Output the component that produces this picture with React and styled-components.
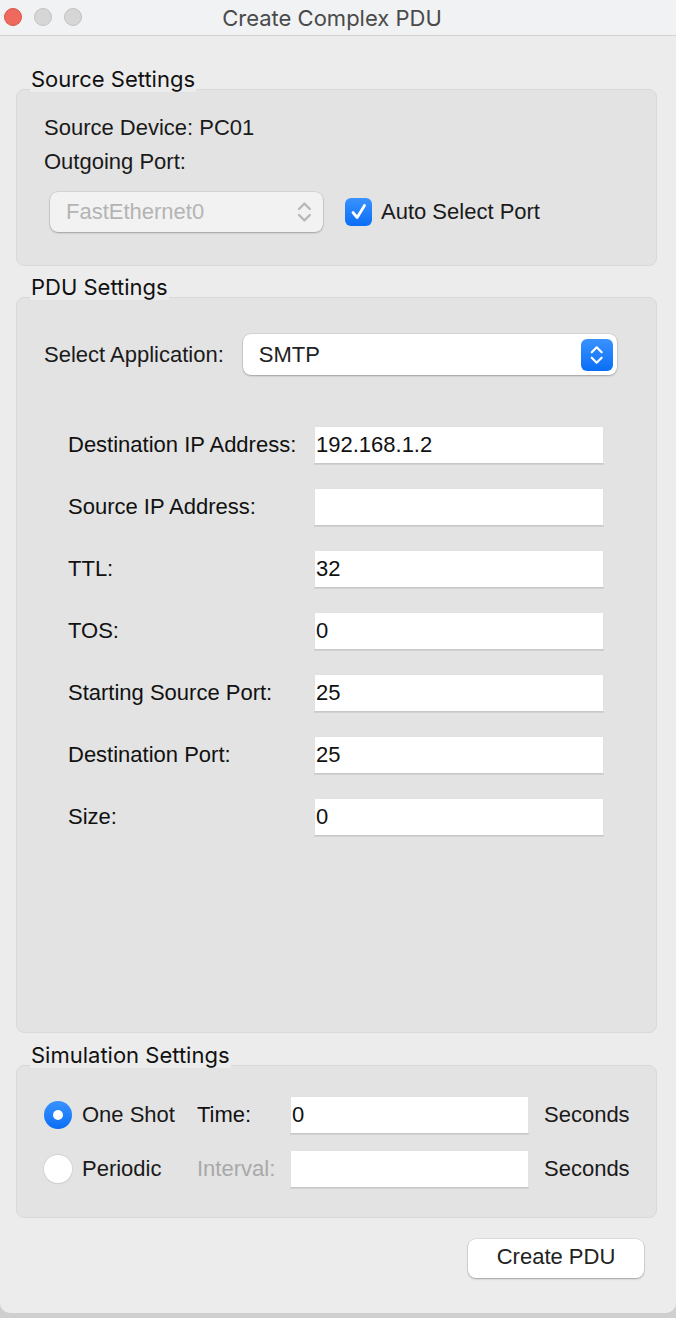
import React from "react";
import styled, { createGlobalStyle } from "styled-components";

const GlobalStyle = createGlobalStyle`
  html, body {
    margin: 0;
    padding: 0;
    background: #cfcfcf;
  }
  * {
    box-sizing: border-box;
  }
`;

const Window = styled.div`
  width: 676px;
  height: 1313px;
  background: #ececec;
  border-radius: 0 0 10px 10px;
  display: flex;
  flex-direction: column;
  overflow: hidden;
  font-family: "Liberation Sans", Arial, sans-serif;
  font-size: 22px;
  color: #1a1a1a;
`;

const TitleBar = styled.div`
  height: 36px;
  flex: none;
  background: #f1f2f4;
  border-bottom: 1px solid #d2d2d2;
  display: flex;
  align-items: center;
  position: relative;
`;

const Lights = styled.div`
  display: flex;
  gap: 12px;
  position: absolute;
  left: 4px;
  top: 8px;
`;

const Light = styled.span`
  width: 18px;
  height: 18px;
  border-radius: 50%;
  background: ${p => (p.$red ? "#ee6a5e" : "#d6d6d6")};
  border: 1px solid ${p => (p.$red ? "#d85448" : "#c3c3c3")};
`;

const Title = styled.div`
  flex: 1;
  text-align: center;
  font-family: Inter, "Liberation Sans", sans-serif;
  font-size: 22px;
  color: #4a4a4a;
  margin-right: 12px;
`;

const Body = styled.div`
  flex: 1;
  display: flex;
  flex-direction: column;
  padding: 30px 19px 0 16px;
`;

const SectionLabel = styled.div`
  align-self: flex-start;
  margin-left: 14px;
  margin-top: ${p => p.$top || 0}px;
  margin-bottom: -3px;
  padding: 0 1px;
  height: 26px;
  line-height: 26px;
  background: #ececec;
  font-family: Inter, "Liberation Sans", sans-serif;
  font-size: 22px;
  color: #111;
  position: relative;
  z-index: 1;
`;

const Panel = styled.div`
  background: #e3e3e3;
  border: 1px solid #d9d9d9;
  border-radius: 8px;
  padding: ${p => p.$pad};
  display: flex;
  flex-direction: column;
`;

const TextLine = styled.div`
  height: 34px;
  line-height: 34px;
`;

const PortRow = styled.div`
  display: flex;
  align-items: center;
  margin-top: 13px;
  margin-left: 6px;
  gap: 22px;
`;

const PopupSelect = styled.div`
  width: ${p => p.$w}px;
  height: ${p => p.$h}px;
  border-radius: 8px;
  background: ${p => (p.$disabled ? "#f2f2f2" : "#ffffff")};
  color: ${p => (p.$disabled ? "#b4b4b4" : "#222")};
  box-shadow: 0 0 0 0.5px rgba(0, 0, 0, 0.12), 0 1px 2px rgba(0, 0, 0, 0.25);
  display: flex;
  align-items: center;
  justify-content: space-between;
  padding: 0 ${p => (p.$disabled ? 10 : 4)}px 0 16px;
`;

const Stepper = styled.span`
  width: 32px;
  height: 32px;
  border-radius: 6px;
  background: linear-gradient(#3a92ff, #0a6ef5);
  display: flex;
  align-items: center;
  justify-content: center;
`;

const CheckWrap = styled.label`
  display: flex;
  align-items: center;
  gap: 9px;
`;

const CheckBox = styled.span`
  width: 27px;
  height: 28px;
  border-radius: 6px;
  background: linear-gradient(#3a92ff, #0a6ef5);
  display: flex;
  align-items: center;
  justify-content: center;
`;

const AppRow = styled.div`
  display: flex;
  align-items: center;
  gap: 19px;
`;

const FieldGrid = styled.div`
  display: grid;
  grid-template-columns: 246px 290px;
  row-gap: 24px;
  align-items: center;
  margin-top: 51px;
  margin-left: 24px;
`;

const TextField = styled.div`
  height: 38px;
  width: ${p => p.$w || 290}px;
  background: #fff;
  border: 1px solid #e2e2e2;
  border-bottom-color: #c8c8c8;
  box-shadow: 0 1px 0 rgba(0, 0, 0, 0.08);
  line-height: 36px;
  padding-left: 1px;
  color: #111;
`;

const SimGrid = styled.div`
  display: grid;
  grid-template-columns: 153px 93px 239px auto;
  row-gap: 16px;
  align-items: center;
`;

const RadioWrap = styled.label`
  display: flex;
  align-items: center;
  gap: 10px;
`;

const Radio = styled.span`
  width: 28px;
  height: 28px;
  border-radius: 50%;
  display: flex;
  align-items: center;
  justify-content: center;
  background: ${p => (p.$on ? "linear-gradient(#3a92ff, #0a6ef5)" : "#fff")};
  box-shadow: ${p =>
    p.$on ? "none" : "0 0 0 1px #d4d4d4, 0 1px 1px rgba(0,0,0,0.15)"};
  &::after {
    content: "";
    width: 10px;
    height: 10px;
    border-radius: 50%;
    background: #fff;
    display: ${p => (p.$on ? "block" : "none")};
  }
`;

const FieldLabel = styled.span`
  color: ${p => (p.$dim ? "#a9a9a9" : "#111")};
`;

const Units = styled.span`
  margin-left: 15px;
`;

const Footer = styled.div`
  display: flex;
  justify-content: flex-end;
  margin-top: 21px;
  padding-right: 13px;
`;

const Button = styled.button`
  width: 176px;
  height: 39px;
  border: none;
  border-radius: 8px;
  background: #fff;
  box-shadow: 0 0 0 0.5px rgba(0, 0, 0, 0.12), 0 1px 2px rgba(0, 0, 0, 0.28);
  font-family: "Liberation Sans", Arial, sans-serif;
  font-size: 22px;
  color: #222;
  padding: 0 0 4px;
`;

const Chevrons = ({ color, size = 18 }) => (
  <svg width={size * 0.7} height={size} viewBox="0 0 14 20" fill="none">
    <path d="M2.5 7.5 L7 3 L11.5 7.5" stroke={color} strokeWidth="2" strokeLinecap="round" strokeLinejoin="round" />
    <path d="M2.5 12.5 L7 17 L11.5 12.5" stroke={color} strokeWidth="2" strokeLinecap="round" strokeLinejoin="round" />
  </svg>
);

const fields = [
  ["Destination IP Address:", "192.168.1.2"],
  ["Source IP Address:", ""],
  ["TTL:", "32"],
  ["TOS:", "0"],
  ["Starting Source Port:", "25"],
  ["Destination Port:", "25"],
  ["Size:", "0"],
];

export default function App() {
  return (
    <>
      <GlobalStyle />
      <Window>
        <TitleBar>
          <Lights>
            <Light $red />
            <Light />
            <Light />
          </Lights>
          <Title>Create Complex PDU</Title>
        </TitleBar>

        <Body>
          <SectionLabel>Source Settings</SectionLabel>
          <Panel $pad="21px 0 33px 27px">
            <TextLine>Source Device: PC01</TextLine>
            <TextLine>Outgoing Port:</TextLine>
            <PortRow>
              <PopupSelect $w={273} $h={40} $disabled>
                <span>FastEthernet0</span>
                <Chevrons color="#b8b8b8" size={24} />
              </PopupSelect>
              <CheckWrap>
                <CheckBox>
                  <svg width="20" height="20" viewBox="0 0 20 20" fill="none">
                    <path d="M4 10.5 L8.2 15.5 L15.5 3.5" stroke="#fff" strokeWidth="2.8" strokeLinecap="round" strokeLinejoin="round" />
                  </svg>
                </CheckBox>
                <span>Auto Select Port</span>
              </CheckWrap>
            </PortRow>
          </Panel>

          <SectionLabel $top={8}>PDU Settings</SectionLabel>
          <Panel $pad="36px 0 196px 27px">
            <AppRow>
              <span>Select Application:</span>
              <PopupSelect $w={374} $h={41}>
                <span>SMTP</span>
                <Stepper>
                  <Chevrons color="#fff" size={22} />
                </Stepper>
              </PopupSelect>
            </AppRow>
            <FieldGrid>
              {fields.map(([label, value]) => (
                <React.Fragment key={label}>
                  <FieldLabel>{label}</FieldLabel>
                  <TextField>{value}</TextField>
                </React.Fragment>
              ))}
            </FieldGrid>
          </Panel>

          <SectionLabel $top={9}>Simulation Settings</SectionLabel>
          <Panel $pad="30px 0 29px 27px">
            <SimGrid>
              <RadioWrap>
                <Radio $on />
                <span>One Shot</span>
              </RadioWrap>
              <FieldLabel>Time:</FieldLabel>
              <TextField $w={239}>0</TextField>
              <Units>Seconds</Units>

              <RadioWrap>
                <Radio />
                <span>Periodic</span>
              </RadioWrap>
              <FieldLabel $dim>Interval:</FieldLabel>
              <TextField $w={239} />
              <Units>Seconds</Units>
            </SimGrid>
          </Panel>

          <Footer>
            <Button>Create PDU</Button>
          </Footer>
        </Body>
      </Window>
    </>
  );
}
